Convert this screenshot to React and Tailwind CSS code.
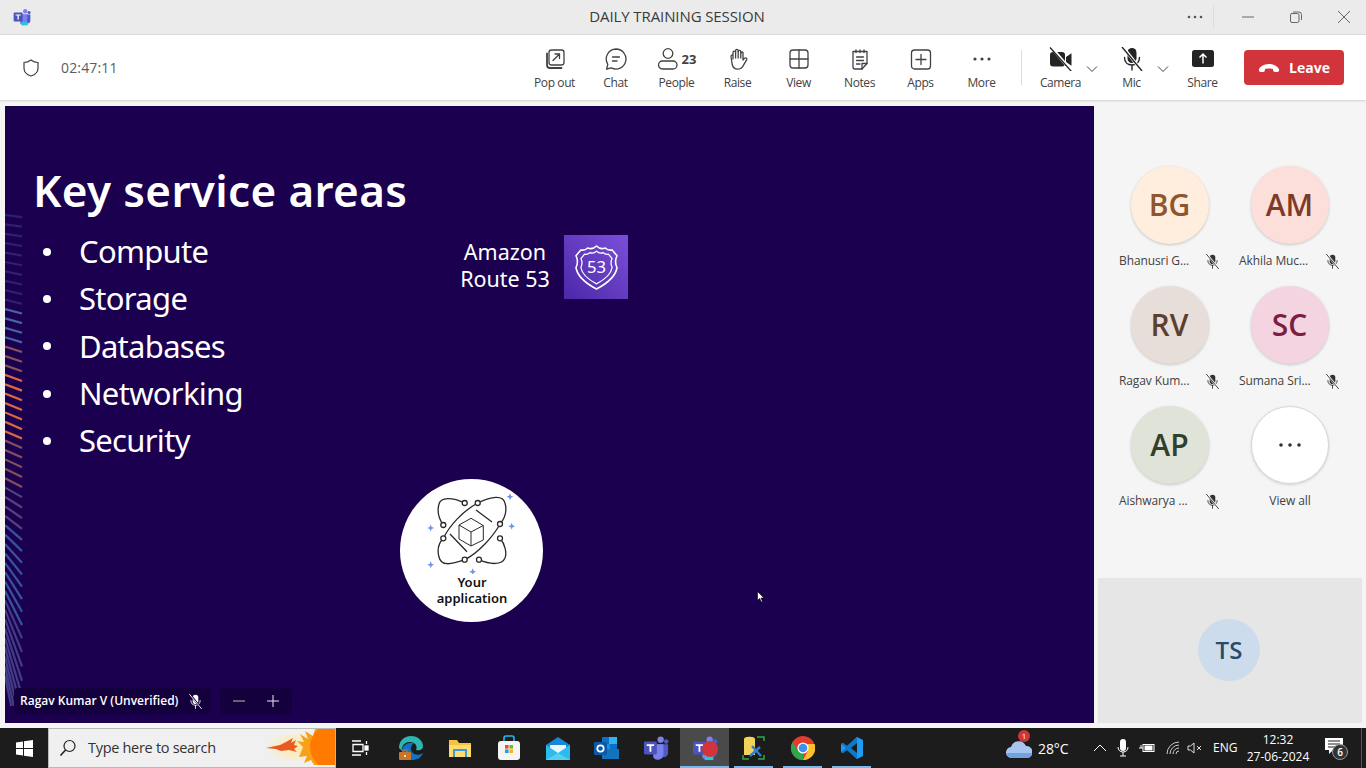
import React from "react";

const UI = { fontFamily: '"Open Sans","Noto Sans",sans-serif' };
const SLIDE = { fontFamily: '"Noto Sans","Open Sans",sans-serif' };

const S = ({ w = 24, h = 24, vb = "0 0 24 24", children, className = "" }) => (
  <svg width={w} height={h} viewBox={vb} fill="none" stroke="#424242" strokeWidth="1.3" strokeLinecap="round" strokeLinejoin="round" className={className}>
    {children}
  </svg>
);

const PopOut = () => (
  <S>
    <rect x="6" y="3" width="15" height="15" rx="2.5" />
    <path d="M4 6.5v11.5a3 3 0 0 0 3 3h11.5" strokeWidth="1.8" />
    <path d="M10 13.5L16.5 7M12 7h4.5v4.5" />
  </S>
);
const Chat = () => (
  <S>
    <path d="M12 2a10 10 0 1 1-4.6 18.9L2.6 22l1.2-4.7A10 10 0 0 1 12 2z" />
    <path d="M8.500 10h7M8.500 14h4.500" />
  </S>
);
const People = () => (
  <S>
    <circle cx="11" cy="6.5" r="4.8" />
    <rect x="1.5" y="14" width="18.5" height="8" rx="4" />
  </S>
);
const Hand = () => (
  <S>
    <path d="M7 12V5.500a1.300 1.300 0 0 1 2.600 0V3.700a1.300 1.300 0 0 1 2.600 0v1a1.300 1.300 0 0 1 2.600 0V6a1.300 1.300 0 0 1 2.200-.6V13l1.400-1.600c1-1.100 3-.3 2.400 1.200l-3.300 5.600c-1.200 2.300-2.800 4-5.800 4-3.200 0-5-2.300-5.600-5.200L5 9.500c-.2-1.500 1.700-2 2-.5" />
    <path d="M9.600 5.500V11M12.200 4.700V11M14.800 6V11" />
  </S>
);
const View = () => (
  <S>
    <rect x="3" y="3" width="18" height="18" rx="3" />
    <path d="M12 3v18M3 12h18" />
  </S>
);
const Notes = () => (
  <S>
    <path d="M5 4.500h14v12l-5 5.500H7a2 2 0 0 1-2-2z" />
    <path d="M8 3v2.500M12 3v2.500M16 3v2.500M8.500 10h7M8.500 13.500h7M8.500 17h3.500M14 22v-5.500h5" />
  </S>
);
const Apps = () => (
  <S>
    <rect x="2.5" y="3" width="19" height="19" rx="3" />
    <path d="M12 7.500v10M7 12.500h10" />
  </S>
);
const More = () => (
  <svg width="24" height="24" viewBox="0 0 24 24" fill="#424242">
    <circle cx="5" cy="12" r="1.6" />
    <circle cx="12" cy="12" r="1.6" />
    <circle cx="19" cy="12" r="1.6" />
  </svg>
);
const CameraOff = () => (
  <svg width="24" height="24" viewBox="0 0 24 24">
    <rect x="1" y="5" width="15" height="14.500" rx="3" fill="#242424" />
    <path d="M17 10l5.500-3.800v12.600L17 15z" fill="#242424" />
    <path d="M2 0l20 23.500" stroke="#fff" strokeWidth="3" />
    <path d="M1 .5l21.500 24" stroke="#242424" strokeWidth="1.3" />
  </svg>
);
const MicOff = ({ w = 24, c = "#242424", bg = "#fff" }) => (
  <svg width={w} height={w} viewBox="0 0 24 24">
    <rect x="7.500" y="1" width="9" height="15" rx="4.500" fill={c} />
    <path d="M4.500 10.500c0 4.500 3 7.500 7.500 7.500s7.500-3 7.500-7.500M12 18v5" stroke={c} strokeWidth="1.4" fill="none" strokeLinecap="round" />
    <path d="M3 0l18 23" stroke={bg} strokeWidth="3" />
    <path d="M2 0l20 24" stroke={c} strokeWidth="1.4" />
  </svg>
);
const Share = () => (
  <svg width="24" height="24" viewBox="0 0 24 24">
    <rect x="1" y="3" width="22" height="17" rx="2.500" fill="#242424" />
    <path d="M12 16.500V7M8.500 10.500L12 7l3.500 3.500" stroke="#fff" strokeWidth="1.5" fill="none" />
  </svg>
);
const Chevron = () => (
  <svg width="12" height="8" viewBox="0 0 12 8" fill="none" stroke="#424242" strokeWidth="1">
    <path d="M1 1.500l5 5 5-5" />
  </svg>
);

const Tool = ({ icon, label, badge }) => (
  <div className="w-[61px] h-[65px] flex flex-col items-center shrink-0">
    <div className="h-[24px] mt-[12px] flex items-center justify-center relative">
      {icon}
      {badge && <span className="absolute left-[25px] top-[2px] text-[13px] font-bold text-[#424242] leading-[20px]">{badge}</span>}
    </div>
    <span className="text-[12px] leading-[16px] mt-[4px] text-[#424242] tracking-[-0.4px] whitespace-nowrap">{label}</span>
  </div>
);

const Avatar = ({ initials, name, bg, fg }) => (
  <div className="w-[120px] h-[120px] flex flex-col items-center shrink-0">
    <div className={`w-[78px] h-[78px] pb-[2px] pr-[1px] rounded-full flex items-center justify-center text-[30px] font-semibold shadow-[0_1px_3px_rgba(0,0,0,0.2)] ${bg} ${fg}`}>
      {initials}
    </div>
    <div className="w-[102px] h-[16px] mt-[9px] flex items-center justify-between">
      <span className="text-[12px] tracking-[-0.1px] text-[#424242] whitespace-nowrap leading-[16px]">{name}</span>
      <span className="mr-[1px] flex"><MicOff w={15} c="#333" bg="#f5f5f5" /></span>
    </div>
  </div>
);

const STRIPES = Array.from({ length: 50 }, (_, i) => {
  const y = 215 + i * 9.4;
  const t = i / 49;
  const slope = t < 0.45 ? 0.12 + t * 0.7 : 0.43 + Math.pow((t - 0.45) / 0.55, 2.6) * 4.5;
  let c = "#5a78c8";
  let o = 0.28;
  if (y > 300 && y < 345) { c = "#4b7fb8"; o = 0.8; }
  if (y >= 345 && y < 370) { c = "#a87058"; o = 0.75; }
  if (y >= 370 && y < 435) { c = "#e8703a"; o = 0.95; }
  if (y >= 435 && y < 480) { c = "#b07060"; o = 0.7; }
  if (y >= 480 && y < 525) { c = "#7c6f96"; o = 0.6; }
  if (y >= 525 && y < 600) { c = "#3f6fb8"; o = 0.75; }
  if (y >= 600) { c = "#7088c8"; o = 0.45; }
  return { y, slope, c, o };
});

const Stripes = () => (
  <svg className="absolute left-0 top-0" width="20" height="600" viewBox="0 0 20 600">
    {STRIPES.map((s, i) => (
      <line key={i} x1="0" y1={s.y - 106} x2="17" y2={s.y - 106 + 17 * s.slope} stroke={s.c} strokeOpacity={s.o} strokeWidth="2.2" />
    ))}
  </svg>
);

const SHIELD = "M23 1Q27 5 32 3Q35 6 39 5L44 11Q41 17 44 23Q42 35 23 45Q4 35 2 23Q5 17 2 11L7 5Q11 6 14 3Q19 5 23 1Z";

const Route53 = () => (
  <div className="w-[64px] h-[64px] bg-gradient-to-tr from-[#4d27a8] to-[#7a4fd8] flex items-center justify-center">
    <svg width="45" height="45" viewBox="0 0 46 46" fill="none" stroke="#fff" strokeWidth="1.6" strokeLinejoin="round">
      <path d={SHIELD} />
      <path d={SHIELD} transform="translate(23 23) scale(0.76) translate(-23 -23)" strokeWidth="1.7" />
      <text x="23" y="29" textAnchor="middle" fontSize="17" fill="#fff" stroke="none" fontFamily="Noto Sans, sans-serif">53</text>
    </svg>
  </div>
);

const Sparkle = ({ x, y }) => (
  <path d={`M${x} ${y - 3.5}L${x + 1} ${y - 1}L${x + 3.5} ${y}L${x + 1} ${y + 1}L${x} ${y + 3.5}L${x - 1} ${y + 1}L${x - 3.5} ${y}L${x - 1} ${y - 1}Z`} fill="#6f93e8" stroke="none" />
);

const NODES = [[64.7, 24], [77.7, 24], [43.3, 46], [100, 45], [43.3, 59.3], [100, 59.3], [64.7, 80.7], [79, 80.7]];

const Atom = () => (
  <div className="w-[143px] h-[143px] rounded-full bg-white flex flex-col items-center">
    <svg width="143" height="95" viewBox="0 0 143 95" fill="none" stroke="#2a2a2a" strokeWidth="1.3" className="shrink-0">
      <path d="M77.700 24C92 17 103 16 105 24C107 31 105 39 100 45C93 58 78 74 64.700 80.700C50 86 41 87 39 78C37 71 38 65 43.300 59.300C50 46 63 32 77.700 24Z" />
      <path d="M64.700 24C52 18 41 18 39 25C37 32 39 40 43.300 46" />
      <path d="M100 59.300C105 65 107 74 105 79C102 86 91 86 79 80.700" />
      <path d="M76 31L92 43M50 55L67 72.700" />
      {NODES.map(([x, y]) => (
        <circle key={`${x}-${y}`} cx={x} cy={y} r="2.500" fill="#fff" />
      ))}
      <path d="M71 39.300L83.300 46.500V61L71 67L59 60V46ZM59 46L71 53L83.300 46.500M71 53V67" strokeWidth="1" />
      <Sparkle x={110} y={17.7} />
      <Sparkle x={30.7} y={49} />
      <Sparkle x={111.7} y={47.3} />
      <Sparkle x={30.7} y={85.7} />
      <Sparkle x={72.7} y={92.7} />
    </svg>
    <div className="text-[13px] font-semibold leading-[16px] text-center text-[#111] ml-[1px]">Your<br />application</div>
  </div>
);

const Flag = () => (
  <svg width="17" height="17" viewBox="0 0 17 17" fill="#fff">
    <path d="M0 2.400L7 1.400V8H0zM8 1.300L17 0v8H8zM0 9h7v6.600L0 14.600zM8 9h9v8l-9-1.300z" />
  </svg>
);

const TeamsLogo = ({ s = 28, rec = false }) => (
  <svg width={s} height={s} viewBox="0 0 28 28">
    <circle cx="19" cy="5" r="3.400" fill="#7b83eb" />
    <circle cx="25" cy="7" r="2.400" fill="#5059c9" />
    <path d="M15 10h12v9a5 5 0 0 1-5 5h-3a4 4 0 0 1-4-4z" fill="#5059c9" />
    <path d="M11 10h11v11a6 6 0 0 1-11 3z" fill="#7b83eb" />
    <rect x="1" y="7" width="14" height="14" rx="1.500" fill="#4b53bc" />
    <path d="M4 10h8v1.800H9V18H7v-6.200H4z" fill="#fff" />
    {rec && <rect x="14" y="22" width="9" height="5" fill="#25c7d9" />}
  </svg>
);

const Edge = () => (
  <svg width="26" height="26" viewBox="0 0 26 26">
    <path d="M1 13C1 5 7 1 13 1c7 0 12 5 12 10 0 4-4 5-7 4 2-4-1-8-6-8-6 0-9 5-8 9z" fill="#2fb5b0" />
    <path d="M4 16c0 6 5 9 10 9 5 0 9-2 11-7-4 3-9 2-11-1-2-3-1-7 2-9-6-1-12 2-12 8z" fill="#1272c4" />
    <rect x="1" y="17" width="12" height="8" rx="1" fill="#c8742a" />
    <rect x="5" y="15" width="4" height="3" fill="none" stroke="#c8742a" />
    <rect x="6" y="20" width="2" height="2" fill="#fde8b0" />
  </svg>
);
const Folder = () => (
  <svg width="24" height="24" viewBox="0 0 24 24">
    <path d="M1 4h8l2 3h12v14H1z" fill="#f5c242" />
    <rect x="1" y="9" width="22" height="12" fill="#ffdb6e" />
    <rect x="5" y="13" width="14" height="8" fill="#3a9bdc" />
    <rect x="7" y="15" width="10" height="6" fill="#ffdb6e" />
  </svg>
);
const Store = () => (
  <svg width="24" height="26" viewBox="0 0 24 26">
    <path d="M7 6V3a2 2 0 0 1 2-2h6a2 2 0 0 1 2 2v3" fill="none" stroke="#29b6e8" strokeWidth="1.6" />
    <rect x="1" y="6" width="22" height="19" rx="3" fill="#f4f4f4" />
    <rect x="8" y="10" width="3.600" height="3.600" fill="#e8522a" />
    <rect x="12.400" y="10" width="3.600" height="3.600" fill="#76b82a" />
    <rect x="8" y="14.400" width="3.600" height="3.600" fill="#1f9fe8" />
    <rect x="12.400" y="14.400" width="3.600" height="3.600" fill="#f9b21a" />
  </svg>
);
const Mail = () => (
  <svg width="24" height="23" viewBox="0 0 24 23">
    <path d="M0 8L12 0l12 8v15H0z" fill="#1a86d6" />
    <path d="M4 8h16v8l-8 4-8-4z" fill="#eaf6fd" />
    <path d="M0 8l12 8 12-8v15H0z" fill="#2dbbee" />
    <path d="M0 23l12-7 12 7z" fill="#55d0f5" />
  </svg>
);
const Outlook = () => (
  <svg width="25" height="24" viewBox="0 0 25 24">
    <rect x="8" y="1" width="15" height="21" rx="1" fill="#0e6fc8" />
    <rect x="15" y="1" width="8" height="7" fill="#30b3ee" />
    <rect x="8" y="8" width="8" height="7" fill="#1990d8" />
    <path d="M8 13l17 0v10H8z" fill="#1473bd" />
    <rect x="0" y="6" width="13" height="13" rx="1" fill="#0a5aa8" />
    <circle cx="6.500" cy="12.500" r="3.200" fill="none" stroke="#fff" strokeWidth="1.7" />
  </svg>
);
const SqlTools = () => (
  <svg width="24" height="24" viewBox="0 0 24 24">
    <path d="M2 3c0-3 11-3 11 0v16H2z" fill="#f1d35c" />
    <path d="M15 1h7v4M22 19v4h-6M7 23H1v-4" fill="none" stroke="#2ba84a" strokeWidth="1.5" />
    <path d="M8 20l10-9M10 10l9 10" stroke="#2d7fd0" strokeWidth="2.400" />
  </svg>
);
const Chrome = () => (
  <svg width="24" height="24" viewBox="0 0 24 24">
    <circle cx="12" cy="12" r="12" fill="#e33b2e" />
    <path d="M12 24A12 12 0 0 1 1.600 6L7 15l5 1z" fill="#2aa84a" />
    <path d="M12 24L17 15l-1-7h7.600A12 12 0 0 1 12 24z" fill="#fbc02d" />
    <circle cx="12" cy="12" r="5.600" fill="#fff" />
    <circle cx="12" cy="12" r="4.300" fill="#3f8fef" />
  </svg>
);
const VSCode = () => (
  <svg width="24" height="24" viewBox="0 0 24 24">
    <path d="M17 1l6 3v16l-6 3-10-9-4 3-2-1V8l2-1 4 3z" fill="#1f9cf0" />
    <path d="M17 1v22L7 14l-4 3-2-1 5-4-5-4 2-1 4 3z" fill="#0b78c9" />
    <path d="M17 7v10l-6-5z" fill="#1c1c1c" />
  </svg>
);

const TaskItem = ({ children, under, active }) => (
  <div className={`w-[49px] h-[40px] shrink-0 flex items-center justify-center relative ${active ? "bg-[#4a4a4a]" : ""}`}>
    {children}
    {under && <div className={`absolute bottom-0 h-[2px] bg-[#76b9ed] ${active ? "left-0 right-0" : "left-[5px] right-[5px]"}`} />}
  </div>
);

const Sun = () => (
  <svg width="70" height="36" viewBox="0 0 70 36" className="absolute right-0 top-0">
    <defs>
      <radialGradient id="glow" cx="0.6" cy="0.5" r="0.6">
        <stop offset="0" stopColor="#ffe9a0" />
        <stop offset="1" stopColor="#ffe9a0" stopOpacity="0" />
      </radialGradient>
    </defs>
    <rect x="0" y="4" width="50" height="28" fill="url(#glow)" />
    <path d="M1 19l14-3 6-3 7-4-2 5 5-3-2 5 4 1-4 3 3 3-8-2-8 1-5-2z" fill="#e85a22" />
    <path d="M38 18l-6-6 7 1-4-8 8 5-3-8 8 5 2-7h20v36H49l-3-5-7 3 3-7-8 1z" fill="#f9a01b" />
    <circle cx="68" cy="18" r="23" fill="#ff7a00" />
  </svg>
);

export default function App() {
  return (
    <div className="w-[1366px] h-[768px] overflow-hidden flex flex-col bg-[#f5f5f5] relative" style={UI}>
      {/* title bar */}
      <div className="h-[35px] shrink-0 bg-[#ebebeb] border-b border-[#dcdcdc] flex items-center relative">
        <div className="ml-[13px] flex"><TeamsLogo s={18} rec /></div>
        <span className="absolute left-0 right-[12px] top-[6px] text-center text-[15px] leading-[20px] text-[#3a3a3a] tracking-[-0.1px] pointer-events-none">DAILY TRAINING SESSION</span>
        <div className="ml-auto flex items-center h-full">
          <svg width="16" height="4" viewBox="0 0 16 4" fill="#555" className="mr-[10px]">
            <circle cx="2" cy="2" r="1.300" /><circle cx="8" cy="2" r="1.300" /><circle cx="14" cy="2" r="1.300" />
          </svg>
          <div className="w-px h-[22px] bg-[#dcdcdc] mr-[28px]" />
          <svg width="12" height="2" viewBox="0 0 12 2" className="mr-[36px]"><path d="M0 1h12" stroke="#666" /></svg>
          <svg width="12" height="12" viewBox="0 0 12 12" fill="none" stroke="#666" className="mr-[36px]">
            <rect x="0.500" y="2.500" width="8.500" height="9" rx="1.500" /><path d="M3 1h6a2.500 2.500 0 0 1 2.500 2.500V9" />
          </svg>
          <svg width="12" height="12" viewBox="0 0 12 12" stroke="#666" className="mr-[16px]"><path d="M0 0l12 12M12 0L0 12" /></svg>
        </div>
      </div>

      {/* toolbar */}
      <div className="h-[65px] shrink-0 bg-white flex items-center shadow-[0_1px_2px_rgba(0,0,0,0.15)] relative z-10">
        <div className="ml-[22px] flex"><svg width="18" height="18" viewBox="0 0 18 18" fill="none" stroke="#424242" strokeWidth="1.2"><path d="M9 1c2 1.600 4.500 2.500 7 2.500V9c0 4-3 6.800-7 8-4-1.200-7-4-7-8V3.500C4.500 3.500 7 2.600 9 1z" /></svg></div>
        <span className="ml-[21px] text-[14px] text-[#5c5c5c] tracking-[0.15px]">02:47:11</span>
        <div className="ml-auto flex items-start mr-[22px] h-full">
          <Tool icon={<PopOut />} label="Pop out" />
          <Tool icon={<Chat />} label="Chat" />
          <Tool icon={<div className="mr-[16px]"><People /></div>} label="People" badge="23" />
          <Tool icon={<Hand />} label="Raise" />
          <Tool icon={<View />} label="View" />
          <Tool icon={<Notes />} label="Notes" />
          <Tool icon={<Apps />} label="Apps" />
          <Tool icon={<More />} label="More" />
          <div className="w-[18px] h-full flex items-center justify-center"><div className="w-px h-[35px] bg-[#dcdcdc]" /></div>
          <div className="w-[71px] relative">
            <Tool icon={<CameraOff />} label="Camera" />
            <div className="absolute left-[56px] top-[30px] flex"><Chevron /></div>
          </div>
          <div className="w-[71px] relative">
            <Tool icon={<MicOff />} label="Mic" />
            <div className="absolute left-[56px] top-[30px] flex"><Chevron /></div>
          </div>
          <Tool icon={<Share />} label="Share" />
          <div className="ml-[11px] mt-[15px] w-[100px] h-[35px] rounded-[4px] bg-[#d1343b] flex items-center justify-center gap-[9px] text-white text-[14px] font-bold">
            <svg width="22" height="10" viewBox="0 0 22 10" fill="#fff"><path d="M1 8c-1-3 4-7 10-7s11 4 10 7c-.3 1-2 1-4 1-1.500 0-2-1-2-3-1.500-.7-6.500-.7-8 0 0 2-.5 3-2 3-2 0-3.700 0-4-1z" /></svg>
            <span>Leave</span>
          </div>
        </div>
      </div>

      {/* main */}
      <div className="flex-1 min-h-0 flex pt-[6px] pl-[5px]">
        <div className="w-[1089px] h-[617px] bg-[#1c0050] relative shrink-0 overflow-hidden" style={SLIDE}>
          <Stripes />
          <div className="pl-[29px] pt-[52px] text-white">
            <h1 className="text-[44px] font-semibold leading-[64px] tracking-[0.35px] ml-[-1px]">Key service areas</h1>
            <ul className="mt-[6px] text-[31px] leading-[47.300px] tracking-[-0.7px]">
              {["Compute", "Storage", "Databases", "Networking", "Security"].map((t) => (
                <li key={t} className="flex items-center">
                  <span className="w-[8px] h-[8px] rounded-full bg-white ml-[9px] mr-[28px]" />
                  {t}
                </li>
              ))}
            </ul>
          </div>
          <div className="absolute left-[441px] top-[129px] flex items-center text-white">
            <div className="text-[21.500px] leading-[27px] text-center w-[118px] mb-[4px] whitespace-nowrap">Amazon<br />Route 53</div>
            <Route53 />
          </div>
          <div className="absolute left-[395px] top-[373px]"><Atom /></div>
          <div className="absolute left-[752px] top-[485px]">
            <svg width="8" height="12" viewBox="0 0 8 12"><path d="M.5.5v9l2.200-2 1.500 3.500 1.300-.6L4 7h3z" fill="#fff" stroke="#000" strokeWidth=".6" /></svg>
          </div>
          <div className="absolute left-[9px] bottom-[9px] flex items-center gap-[9px]" style={UI}>
            <div className="h-[26px] w-[197px] rounded-[4px] bg-[#13003c] flex items-center pl-[6px] text-[12px] font-semibold text-white whitespace-nowrap">
              Ragav Kumar V (Unverified)
              <span className="ml-[10px] flex"><MicOff w={15} c="#fff" bg="#13003c" /></span>
            </div>
            <div className="h-[26px] w-[72px] rounded-[4px] bg-[#13003c] flex items-center justify-center gap-[22px]">
              <svg width="12" height="2" viewBox="0 0 12 2"><path d="M0 1h12" stroke="#bbb" /></svg>
              <svg width="12" height="12" viewBox="0 0 12 12"><path d="M0 6h12M6 0v12" stroke="#eee" /></svg>
            </div>
          </div>
        </div>

        {/* side panel */}
        <div className="flex-1 flex flex-col items-start">
          <div className="pt-[60px] pl-[16px] grid grid-cols-2 w-[256px] h-[472px] content-start">
            <Avatar initials="BG" name="Bhanusri G..." bg="bg-[#ffeedd]" fg="text-[#8e562e]" />
            <Avatar initials="AM" name="Akhila Muc..." bg="bg-[#fcdfda]" fg="text-[#7d3a28]" />
            <Avatar initials="RV" name="Ragav Kum..." bg="bg-[#e7ded9]" fg="text-[#5c3f30]" />
            <Avatar initials="SC" name="Sumana Sri..." bg="bg-[#f4d4e0]" fg="text-[#7a1f43]" />
            <Avatar initials="AP" name="Aishwarya ..." bg="bg-[#dfe3d8]" fg="text-[#30402a]" />
            <div className="w-[120px] h-[120px] flex flex-col items-center">
              <div className="w-[78px] h-[78px] rounded-full bg-white border border-[#d8d8d8] shadow-[0_1px_3px_rgba(0,0,0,0.15)] flex items-center justify-center">
                <svg width="24" height="4" viewBox="0 0 24 4" fill="#333"><circle cx="3" cy="2" r="1.800" /><circle cx="12" cy="2" r="1.800" /><circle cx="21" cy="2" r="1.800" /></svg>
              </div>
              <span className="mt-[9px] text-[12px] leading-[16px] text-[#424242] tracking-[-0.1px]">View all</span>
            </div>
          </div>
          <div className="w-[264px] h-[145px] ml-[4px] pr-[2px] pb-[2px] bg-[#e6e6e6] flex items-center justify-center">
            <div className="w-[62px] h-[62px] rounded-full bg-[#cddcec] flex items-center justify-center text-[24px] font-semibold text-[#2b4a66]">TS</div>
          </div>
        </div>
      </div>

      {/* taskbar */}
      <div className="h-[40px] shrink-0 mt-[5px] bg-[#1c1c1c] flex items-center text-white">
        <div className="w-[48px] flex justify-center shrink-0"><Flag /></div>
        <div className="w-[288px] h-[40px] bg-[#f0f0f0] border border-[#b8b8b8] flex items-center relative overflow-hidden shrink-0">
          <svg width="18" height="18" viewBox="0 0 18 18" fill="none" stroke="#222" strokeWidth="1.2" className="ml-[10px]">
            <circle cx="10.500" cy="7" r="5.500" /><path d="M6.500 11L1.500 16.500" strokeWidth="1.600" />
          </svg>
          <span className="ml-[11px] text-[14.500px] text-[#333] tracking-[-0.3px]">Type here to search</span>
          <Sun />
        </div>
        <div className="w-[48px] flex justify-center shrink-0">
          <svg width="18" height="16" viewBox="0 0 18 16" fill="none" stroke="#fff" strokeWidth="1.300">
            <path d="M1 1h9M1 15h9M2 4.500h10v7H2zM15.500 1v3M15.500 12v3" /><rect x="14" y="6" width="3" height="4" fill="#fff" />
          </svg>
        </div>
        <div className="ml-[2px] flex shrink-0">
          <TaskItem><Edge /></TaskItem>
          <TaskItem><Folder /></TaskItem>
          <TaskItem><Store /></TaskItem>
          <TaskItem><Mail /></TaskItem>
          <TaskItem><Outlook /></TaskItem>
          <TaskItem><TeamsLogo s={26} /></TaskItem>
          <TaskItem active under>
            <TeamsLogo s={26} rec />
            <span className="absolute left-[22px] top-[13px] w-[16px] h-[16px] rounded-full bg-[#d1343b]" />
          </TaskItem>
          <TaskItem under><SqlTools /></TaskItem>
          <TaskItem under><Chrome /></TaskItem>
          <TaskItem under><VSCode /></TaskItem>
        </div>
        <div className="ml-[130px] relative flex shrink-0">
          <svg width="26" height="20" viewBox="0 0 26 20"><path d="M6 20a5.500 5.500 0 0 1-1-11 8 8 0 0 1 15-1 5.500 5.500 0 0 1 1 12z" fill="#a7c5ee" /><path d="M1 15a5 5 0 0 0 5 5h15a5 5 0 0 0 5-5z" fill="#6fa3e2" /></svg>
          <span className="absolute left-[12px] top-[-8px] w-[12px] h-[12px] rounded-full bg-[#d1343b] text-[8px] leading-[12px] text-center text-white">1</span>
        </div>
        <span className="ml-[6px] w-[31px] text-[14px] tracking-[-0.1px] shrink-0 whitespace-nowrap">28°C</span>
        <svg width="14" height="8" viewBox="0 0 14 8" fill="none" stroke="#fff" strokeWidth="1" className="ml-[24px] shrink-0"><path d="M1 7l6-6 6 6" /></svg>
        <svg width="12" height="18" viewBox="0 0 12 18" fill="#fff" className="ml-[10px] shrink-0"><rect x="3" y="0" width="6" height="12" rx="3" /><path d="M1 8c0 3 2 5 5 5s5-2 5-5M6 13v4M3 17h6" stroke="#fff" fill="none" /></svg>
        <svg width="16" height="12" viewBox="0 0 16 12" fill="none" stroke="#fff" className="ml-[10px] shrink-0"><rect x="4" y="2.500" width="11" height="7" /><rect x="6" y="4" width="7" height="4" fill="#fff" /><path d="M0 6h4M2 3v3" /></svg>
        <svg width="14" height="14" viewBox="0 0 14 14" fill="none" stroke="#ccc" className="ml-[11px] shrink-0"><path d="M1 13A12 12 0 0 1 13 1M4 13a9 9 0 0 1 9-9M7 13a6 6 0 0 1 6-6M10 13a3 3 0 0 1 3-3" /></svg>
        <svg width="16" height="12" viewBox="0 0 16 12" fill="none" stroke="#ddd" className="ml-[7px] shrink-0"><path d="M1 4h2.500L7 1v10L3.500 8H1zM10 4l4 4M14 4l-4 4" /></svg>
        <span className="ml-[10px] w-[25px] text-[12px] shrink-0">ENG</span>
        <div className="w-[80px] flex flex-col items-center text-[12px] leading-[17px] shrink-0">
          <span>12:32</span>
          <span>27-06-2024</span>
        </div>
        <div className="ml-[7px] relative w-[24px] h-[24px] shrink-0">
          <svg width="18" height="16" viewBox="0 0 18 16" fill="#fff" className="absolute left-0 top-[2px]"><path d="M0 0h18v12H8l-4 4v-4H0z" /><path d="M3 3h12M3 6h12M3 9h8" stroke="#1c1c1c" /></svg>
          <span className="absolute left-[7px] top-[8px] w-[16px] h-[16px] rounded-full bg-[#333] border border-[#999] text-[10px] leading-[14px] text-center font-semibold">6</span>
        </div>
        <div className="ml-[12px] w-px h-[40px] bg-[#555] shrink-0" />
      </div>
    </div>
  );
}
